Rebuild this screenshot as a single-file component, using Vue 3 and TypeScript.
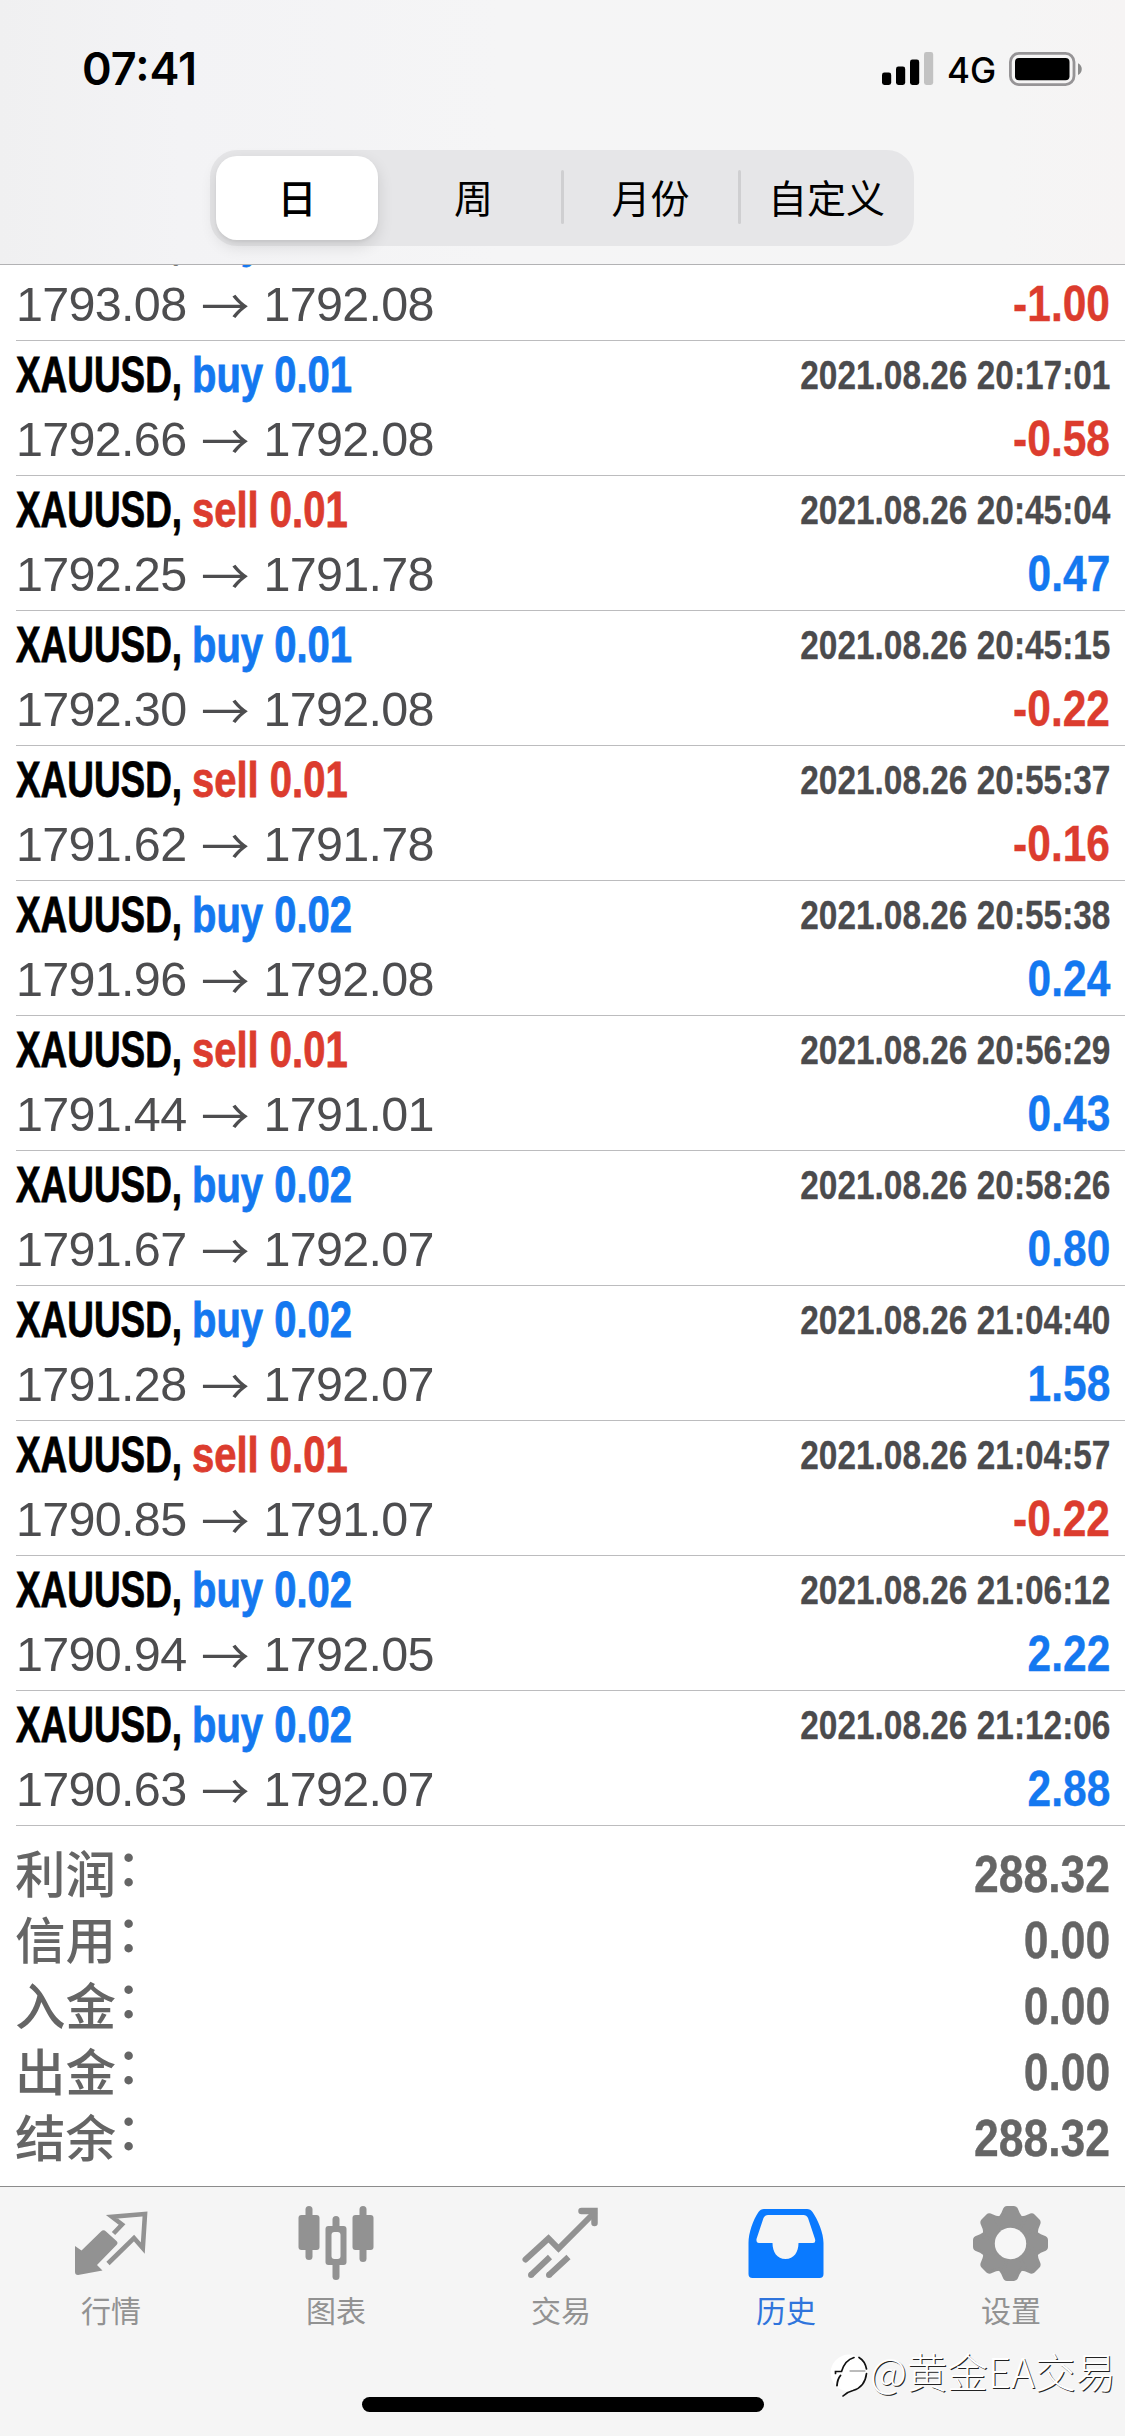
<script setup lang="ts">
type Side = 'buy' | 'sell'
interface Deal {
  side: Side
  volume: string
  open: string
  close: string
  time: string
  profit: string
}

const periods: string[] = ['日', '周', '月份', '自定义']

const deals: Deal[] = [
  { side: 'buy', volume: '0.01', open: '1793.08', close: '1792.08', time: '', profit: '-1.00' },
  { side: 'buy', volume: '0.01', open: '1792.66', close: '1792.08', time: '2021.08.26 20:17:01', profit: '-0.58' },
  { side: 'sell', volume: '0.01', open: '1792.25', close: '1791.78', time: '2021.08.26 20:45:04', profit: '0.47' },
  { side: 'buy', volume: '0.01', open: '1792.30', close: '1792.08', time: '2021.08.26 20:45:15', profit: '-0.22' },
  { side: 'sell', volume: '0.01', open: '1791.62', close: '1791.78', time: '2021.08.26 20:55:37', profit: '-0.16' },
  { side: 'buy', volume: '0.02', open: '1791.96', close: '1792.08', time: '2021.08.26 20:55:38', profit: '0.24' },
  { side: 'sell', volume: '0.01', open: '1791.44', close: '1791.01', time: '2021.08.26 20:56:29', profit: '0.43' },
  { side: 'buy', volume: '0.02', open: '1791.67', close: '1792.07', time: '2021.08.26 20:58:26', profit: '0.80' },
  { side: 'buy', volume: '0.02', open: '1791.28', close: '1792.07', time: '2021.08.26 21:04:40', profit: '1.58' },
  { side: 'sell', volume: '0.01', open: '1790.85', close: '1791.07', time: '2021.08.26 21:04:57', profit: '-0.22' },
  { side: 'buy', volume: '0.02', open: '1790.94', close: '1792.05', time: '2021.08.26 21:06:12', profit: '2.22' },
  { side: 'buy', volume: '0.02', open: '1790.63', close: '1792.07', time: '2021.08.26 21:12:06', profit: '2.88' },
]

const totals: { label: string; value: string }[] = [
  { label: '利润', value: '288.32' },
  { label: '信用', value: '0.00' },
  { label: '入金', value: '0.00' },
  { label: '出金', value: '0.00' },
  { label: '结余', value: '288.32' },
]
</script>

<template>
  <div class="screen">
    <header class="header">
      <div class="status">
        <span class="clock">07:41</span>
        <div class="indicators">
          <svg class="signal" width="52" height="33" viewBox="0 0 52 33">
            <rect x="0" y="20.5" width="9.2" height="12.5" rx="2.4" />
            <rect x="14" y="14.5" width="9.2" height="18.5" rx="2.4" />
            <rect x="28" y="7.5" width="9.2" height="25.5" rx="2.4" />
            <rect x="42" y="0" width="9.2" height="33" rx="2.4" fill="#c2c2c2" />
          </svg>
          <span class="network">4G</span>
          <svg class="battery" width="74" height="34" viewBox="0 0 74 34">
            <rect x="1.4" y="1.4" width="63.6" height="31.2" rx="8.5" fill="none" stroke="#969496" stroke-width="2.8" />
            <rect x="6" y="6" width="54.5" height="22.2" rx="4" />
            <path d="M69 11.2c5 2 5 9.600 0 11.800z" fill="#8c8c8c" />
          </svg>
        </div>
      </div>
      <nav class="segments">
        <button v-for="(p, i) in periods" :key="p" class="segment" :class="{ selected: i === 0, divided: i > 1 }">{{ p }}</button>
      </nav>
    </header>

    <main class="list">
      <article v-for="(d, i) in deals" :key="i" class="deal">
        <div class="line title">
          <div class="name">
            <span class="symbol">XAUUSD,</span><span class="side" :class="d.side">{{ d.side }} {{ d.volume }}</span>
          </div>
          <time class="time">{{ d.time }}</time>
        </div>
        <div class="line">
          <div class="prices"><span>{{ d.open }}</span><span class="arrow">→</span><span>{{ d.close }}</span></div>
          <span class="profit" :class="d.profit.startsWith('-') ? 'sell' : 'buy'">{{ d.profit }}</span>
        </div>
      </article>
    </main>

    <section class="totals">
      <div v-for="t in totals" :key="t.label" class="total">
        <span class="label">{{ t.label }}<span class="colon">：</span></span>
        <span class="value">{{ t.value }}</span>
      </div>
    </section>

    <footer class="tabbar">
      <nav class="tabs">
        <div class="tab">
          <svg width="80" height="76" viewBox="0 0 80 76">
            <path d="M4 40 10.500 44.500 30 25.500Q32.500 23 35 25.500L45.500 35Q47.500 37 45.500 39L26 59 31.500 64.500 7 69Q4 69 4 66Z" fill="#929292" />
            <path d="M42.500 27.500 51 18.500 41 10.800 74 8 71.800 42 63 32 37 57.500" fill="none" stroke="#929292" stroke-width="4.600" />
          </svg>
          <span>行情</span>
        </div>
        <div class="tab">
          <svg width="80" height="76" viewBox="0 0 80 76" fill="#929292">
            <rect x="9.500" y="0" width="7" height="54" rx="3.500" />
            <rect x="2.500" y="9" width="21" height="35" rx="3" />
            <rect x="36.500" y="10" width="7" height="20" rx="3.500" />
            <rect x="36.500" y="50" width="7" height="24" rx="3.500" />
            <rect x="29.500" y="20" width="21" height="39" rx="3" />
            <rect x="35.500" y="26" width="9" height="27" rx="3" fill="#f6f6f6" />
            <rect x="63.500" y="0" width="7" height="56" rx="3.500" />
            <rect x="56.500" y="9" width="21" height="35" rx="3" />
          </svg>
          <span>图表</span>
        </div>
        <div class="tab">
          <svg width="80" height="76" viewBox="0 0 80 76" fill="none" stroke="#929292" stroke-width="6">
            <path d="M4.500 53.500 27.500 32.500 37.500 42.500 73 7" stroke-linecap="round" />
            <path d="M60.500 5H73.500V17" stroke-linecap="round" stroke-width="6.500" />
            <path d="M29 51 10 69M47.500 51 28 69" />
            <path d="M10 69h.01M28 69h.01" stroke-linecap="round" />
          </svg>
          <span>交易</span>
        </div>
        <div class="tab active">
          <svg width="80" height="76" viewBox="0 0 80 76" fill="#0a7aff" fill-rule="evenodd">
            <path d="M18 3H61Q64.500 3 66.500 6C72 14 77.500 27 77.500 37V68Q77.500 72 73.500 72H6.500Q2.500 72 2.500 68V37C2.500 27 7 14 12.500 6Q14.500 3 18 3ZM22 9Q19 9 17.500 12L10.500 33Q10 37 13 37H26.500C26.500 46 31 53 39.500 53S52.500 46 52.500 37H67Q70 37 69 33L62 12Q60.500 9 57.500 9Z" />
          </svg>
          <span>历史</span>
        </div>
        <div class="tab">
          <svg width="80" height="76" viewBox="0 0 80 76">
            <g fill="#929292" stroke="#929292" stroke-width="3" stroke-linejoin="round">
              <circle cx="39.500" cy="37.500" r="27" />
              <path v-for="n in 8" :key="n" d="M25 14Q30.500 12 33 4.500Q34 1.500 36 1.500H43Q45 1.500 46 4.500Q48.500 12 54 14L39.500 37.500Z" :transform="`rotate(${n * 45} 39.5 37.5)`" />
            </g>
            <circle cx="39.500" cy="37.500" r="15.700" fill="#f6f6f6" />
          </svg>
          <span>设置</span>
        </div>
      </nav>
      <div class="home"></div>
      <div class="watermark">
        <svg width="40" height="48" viewBox="0 0 40 48" fill="none" stroke="#111" stroke-linecap="round">
          <circle cx="20" cy="22" r="18.500" fill="#fff" stroke="none" />
          <path d="M14 45Q18 41 24 39.500Q36 36 37.500 22.500" fill="#fff" stroke-width="1.700" />
          <path d="M6.500 22.500V20.500H12.500Q16 9 25 6.500M30 6.500Q36 10 37.500 18" stroke-width="1.700" />
          <path d="M11.500 24.500Q8.500 28 8 34.500" stroke-width="1.900" />
          <path d="M21 20H36" stroke-width="0.800" stroke="#555" />
        </svg>
        <span>@黄金EA交易</span>
      </div>
    </footer>
  </div>
</template>

<style>
body {
  margin: 0;
  background: #fff;
}
</style>

<style scoped>
.screen {
  width: 1125px;
  height: 2436px;
  display: flex;
  flex-direction: column;
  overflow: hidden;
  background: #fff;
  color: #000;
  font-family: "Liberation Sans", "Noto Sans CJK SC", sans-serif;
  white-space: nowrap;
}
.header {
  box-sizing: border-box;
  height: 265px;
  flex: none;
  border-bottom: 1px solid #b2b2b4;
  background: linear-gradient(90deg, #f0f0f1 0, #f3f3f5 180px, #f5f5f6 500px, #f5f5f5 1000px, #f6f4f4 100%);
}
.status {
  display: flex;
  justify-content: space-between;
  height: 150px;
  padding: 0 42px 0 82px;
}
.clock {
  height: 54px;
  margin-top: 42px;
  font: 600 45px/54px Inter, sans-serif;
}
.indicators {
  display: flex;
  align-items: flex-start;
  padding-top: 52px;
}
.network {
  width: 62px;
  margin: -4px 0 0 13px;
  font: 500 35px/44px Inter, sans-serif;
}
.segments {
  display: grid;
  grid-template-columns: 175px 177px 177px 175px;
  width: 704px;
  height: 96px;
  margin-left: 210px;
  border-radius: 27px;
  background: #e6e6e8;
  align-items: center;
}
.segment {
  position: relative;
  height: 84px;
  padding: 0 0 4px;
  border: 0;
  background: none;
  color: #000;
  font: 400 39px/76px "Noto Sans CJK SC", sans-serif;
}
.segment.selected {
  width: 162px;
  margin-left: 6px;
  border-radius: 21px;
  background: #fff;
  font-weight: 500;
  box-shadow: 0 6px 16px rgba(0, 0, 0, 0.12), 0 2px 3px rgba(0, 0, 0, 0.05);
}
.segment.divided::before {
  content: "";
  position: absolute;
  left: -1px;
  top: 14px;
  width: 3px;
  height: 54px;
  border-radius: 2px;
  background: #cfcfd1;
}
.list {
  flex: none;
  height: 1561px;
  overflow: hidden;
  display: flex;
  flex-direction: column;
  justify-content: flex-end;
}
.deal {
  flex: none;
  box-sizing: border-box;
  height: 135px;
  margin-left: 16px;
  padding: 5px 15px 0 0;
  border-bottom: 1px solid #bcbcbe;
}
.line {
  display: flex;
  justify-content: space-between;
  height: 64px;
}
.title {
  height: 57px;
  font-weight: 700;
}
.name {
  display: flex;
  font-size: 50px;
  line-height: 59px;
  -webkit-text-stroke: 0.8px currentColor;
}
.symbol {
  width: 176px;
  transform: scaleX(0.738);
  transform-origin: left;
}
.side {
  transform: scaleX(0.8);
  transform-origin: left;
}
.time {
  font-size: 40px;
  line-height: 59px;
  color: #4b4b4d;
  -webkit-text-stroke: 0.3px currentColor;
  transform: scaleX(0.835);
  transform-origin: right;
}
.prices {
  display: flex;
  font-size: 48.500px;
  letter-spacing: -0.700px;
  line-height: 72px;
  color: #4d4d4f;
}
.arrow {
  width: 77px;
  text-align: center;
  font-family: "Noto Sans CJK SC", sans-serif;
}
.profit {
  font-size: 50px;
  line-height: 72px;
  font-weight: 700;
  -webkit-text-stroke: 0.4px currentColor;
  transform: scaleX(0.85);
  transform-origin: right;
}
.buy {
  color: #1478f0;
}
.sell {
  color: #dc3c2e;
}
.totals {
  flex: none;
  box-sizing: border-box;
  height: 360px;
  padding: 12px 15px 0;
  color: #656565;
}
.total {
  display: flex;
  justify-content: space-between;
  height: 66px;
}
.label {
  font: 500 50.500px/66px "Noto Sans CJK SC", sans-serif;
}
.colon {
  position: relative;
  top: -7px;
}
.value {
  font-size: 52px;
  line-height: 72px;
  font-weight: 700;
  -webkit-text-stroke: 0.4px currentColor;
  transform: scaleX(0.855);
  transform-origin: right;
}
.tabbar {
  position: relative;
  box-sizing: border-box;
  flex: none;
  height: 250px;
  border-top: 1px solid #8c8c8c;
  background: #f5f5f5;
}
.tabs {
  display: grid;
  grid-template-columns: repeat(5, 1fr);
  height: 210px;
}
.tab {
  display: flex;
  flex-direction: column;
  align-items: center;
  padding: 19px 3px 0 0;
  color: #929292;
  font: 400 30px/44px "Noto Sans CJK SC", sans-serif;
}
.tab span {
  margin-top: 5px;
}
.tab.active {
  color: #2f74dc;
}
.home {
  width: 402px;
  height: 15px;
  margin-left: 362px;
  border-radius: 8px;
  background: #000;
}
.watermark {
  position: absolute;
  left: 829px;
  top: 164px;
  display: flex;
  color: #fff;
  font: 300 40.500px/40px "Noto Sans CJK SC", sans-serif;
  text-shadow: 1px 1px 0 #222;
}
.watermark span {
  margin-left: 1px;
}
</style>
